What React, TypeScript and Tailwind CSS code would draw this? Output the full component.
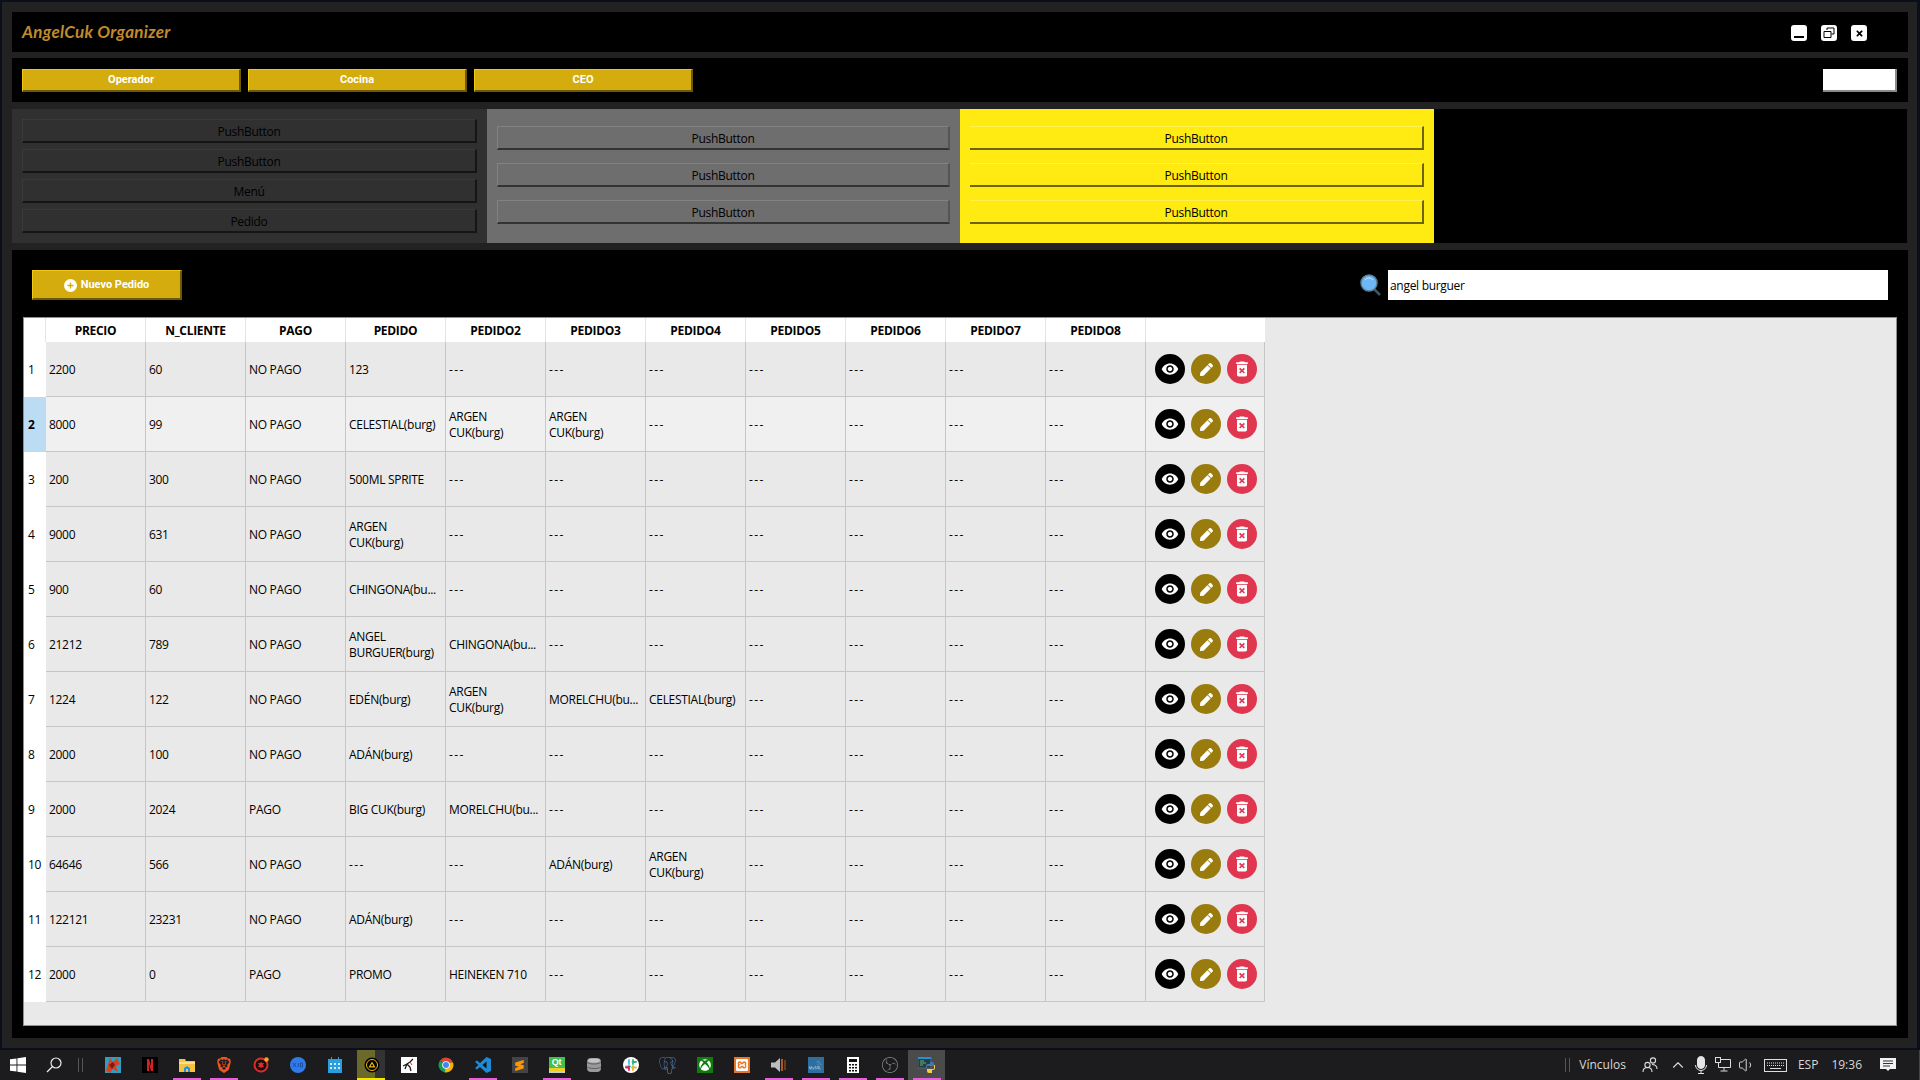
import { ChevronUp, Volume1 } from 'lucide-react'
import { MdDeleteForever, MdVisibility } from 'react-icons/md'
import { FaPen, FaPlus, FaTimes, FaXbox } from 'react-icons/fa'
import { SiBrave, SiMysql, SiObsstudio, SiPostgresql, SiSublimetext, SiXampp } from 'react-icons/si'
import type { ReactNode } from 'react'

const HEADERS = ['PRECIO', 'N_CLIENTE', 'PAGO', 'PEDIDO', 'PEDIDO2', 'PEDIDO3', 'PEDIDO4', 'PEDIDO5', 'PEDIDO6', 'PEDIDO7', 'PEDIDO8']
const ARGEN = 'ARGEN\nCUK(burg)'

// only the cells that differ from '---' are listed, the rest gets padded
const ROWS: string[][] = [
  ['2200', '60', 'NO PAGO', '123'],
  ['8000', '99', 'NO PAGO', 'CELESTIAL(burg)', ARGEN, ARGEN],
  ['200', '300', 'NO PAGO', '500ML SPRITE'],
  ['9000', '631', 'NO PAGO', ARGEN],
  ['900', '60', 'NO PAGO', 'CHINGONA(bu...'],
  ['21212', '789', 'NO PAGO', 'ANGEL\nBURGUER(burg)', 'CHINGONA(bu...'],
  ['1224', '122', 'NO PAGO', 'EDÉN(burg)', ARGEN, 'MORELCHU(bu...', 'CELESTIAL(burg)'],
  ['2000', '100', 'NO PAGO', 'ADÁN(burg)'],
  ['2000', '2024', 'PAGO', 'BIG CUK(burg)', 'MORELCHU(bu...'],
  ['64646', '566', 'NO PAGO', '---', '---', 'ADÁN(burg)', ARGEN],
  ['122121', '23231', 'NO PAGO', 'ADÁN(burg)'],
  ['2000', '0', 'PAGO', 'PROMO', 'HEINEKEN 710'],
]

function PanelButton({ label, className }: { label: string; className: string }) {
  return <button className={`flex h-6 items-center justify-center pt-[3px] text-xs ${className}`}>{label}</button>
}

function RoleButton({ label }: { label: string }) {
  return (
    <button className="h-[23px] w-[219px] border-t border-l border-[#f0c814] border-r-2 border-b-2 border-r-[#6e5800] border-b-[#6e5800] bg-[#d4ac0d] pt-px font-['Roboto',sans-serif] text-[11px] font-bold tracking-normal text-white">
      {label}
    </button>
  )
}

function WindowControl({ children }: { children: ReactNode }) {
  return <button className="flex h-4 w-4 items-center justify-center rounded-[3px] bg-white text-black">{children}</button>
}

function ActionButtons() {
  return (
    <div className="flex items-center gap-1.5 pl-[9px]">
      <button className="flex h-[30px] w-[30px] items-center justify-center rounded-full bg-black text-white"><MdVisibility size={18} /></button>
      <button className="flex h-[30px] w-[30px] items-center justify-center rounded-full bg-[#9a7b0d] text-white"><FaPen size={13} /></button>
      <button className="flex h-[30px] w-[30px] items-center justify-center rounded-full bg-[#e0364f] text-white"><MdDeleteForever size={20} /></button>
    </div>
  )
}

function OrdersTable() {
  return (
    <div className="mx-[11px] mb-3 flex-1 border border-[#8f8f8f] bg-[#e9e9e9]">
      <table className="w-[1241px] table-fixed border-separate border-spacing-0 text-xs text-black">
        <colgroup>
          <col className="w-[22px]" />
          {HEADERS.map(h => <col key={h} className="w-[100px]" />)}
          <col className="w-[119px]" />
        </colgroup>
        <thead>
          <tr className="h-6 bg-white">
            <th className="border-r border-[#e4e4e4]" />
            {HEADERS.map(h => <th key={h} className="border-r border-[#e4e4e4] pt-0.5 font-bold">{h}</th>)}
            <th />
          </tr>
        </thead>
        <tbody>
          {ROWS.map((row, i) => {
            const selected = i === 1
            const cells = [...row, ...Array(11 - row.length).fill('---')]
            return (
              <tr key={i} className={`h-[55px] ${selected ? 'bg-[#f0f0f0]' : ''}`}>
                <td className={`pl-1 ${selected ? 'bg-[#bcdcf4] font-bold' : 'bg-white'}`}>{i + 1}</td>
                {cells.map((cell, j) => (
                  <td
                    key={j}
                    className={`whitespace-pre-line border-r border-b border-[#c6c6c6] px-[3px] pt-0.5 leading-4 ${cell === '---' ? 'tracking-[1.4px]' : ''}`}
                  >
                    {cell}
                  </td>
                ))}
                <td className="border-r border-b border-[#c6c6c6]"><ActionButtons /></td>
              </tr>
            )
          })}
        </tbody>
      </table>
    </div>
  )
}

function TaskIcon({ children, mark, className = '' }: { children?: ReactNode; mark?: boolean; className?: string }) {
  return (
    <div className={`relative flex h-[30px] w-[37px] items-center justify-center ${className}`}>
      {children}
      {mark && <span className="absolute bottom-0 left-1/2 h-0.5 w-7 -translate-x-1/2 bg-[#e85fdc]" />}
    </div>
  )
}

function AppIcons() {
  return (
    <div className="flex">
      <TaskIcon>
        <svg width="16" height="16" viewBox="0 0 16 16">
          <rect width="16" height="16" fill="#2d9fc4" />
          <path d="M1 14 5 1l3 4 4-4 3 6-4 2 2 6-5-3-3 4z" fill="#d9401f" />
          <path d="M4 8 8 5l2 3-3 4z" fill="#7a1d12" />
        </svg>
      </TaskIcon>
      <TaskIcon>
        <svg width="16" height="16" viewBox="0 0 16 16">
          <rect width="16" height="16" fill="#000" />
          <path d="M5 2h2l2 7V2h2v12H9L7 7v7H5z" fill="#d81f26" />
        </svg>
      </TaskIcon>
      <TaskIcon mark>
        <svg width="16" height="16" viewBox="0 0 16 16">
          <path d="M0 2h6l1 2h9v11H0z" fill="#f5c242" />
          <path d="M0 5h16v2H0z" fill="#fbe08a" />
          <path d="M5 15v-4l3-2 3 2v4H9v-3H7v3z" fill="#2a8fd8" />
        </svg>
      </TaskIcon>
      <TaskIcon mark><SiBrave size={16} className="text-[#f0531f]" /></TaskIcon>
      <TaskIcon>
        <svg width="16" height="16" viewBox="0 0 16 16">
          <circle cx="8" cy="8" r="6.5" fill="#111" stroke="#e22a2a" strokeWidth="2" />
          <path d="M8 4.5 11 10H5zM8 11.5 5 6h6z" fill="#e22a2a" />
          <circle cx="13.5" cy="2.5" r="2.2" fill="#f5a623" />
        </svg>
      </TaskIcon>
      <TaskIcon>
        <svg width="16" height="16" viewBox="0 0 16 16">
          <circle cx="8" cy="8" r="8" fill="#2f7be8" />
          <path d="M3 6l3 4M6 6l-3 4M8 10l1-4M10.5 6h2v4h-2z" stroke="#1c50a8" strokeWidth="1" fill="none" />
        </svg>
      </TaskIcon>
      <TaskIcon>
        <svg width="14" height="16" viewBox="0 0 14 16">
          <path d="M0 2h3V0h1v2h6V0h1v2h3v14H0z" fill="#2a9fe0" />
          <path d="M2 6h2v2H2zM6 6h2v2H6zM10 6h2v2h-2zM2 10h2v2H2zM6 10h2v2H6zM10 10h2v2h-2z" fill="#cfeaff" />
        </svg>
      </TaskIcon>
      <TaskIcon>
        <div className="absolute inset-y-0 left-1 w-[18px] bg-[#6b6a2a]" />
        <div className="absolute inset-y-0 left-[22px] w-[10px] bg-[#333]" />
        <svg width="16" height="16" viewBox="0 0 16 16" className="relative">
          <circle cx="8" cy="8" r="7.5" fill="#000" />
          <circle cx="8" cy="8" r="5.5" fill="none" stroke="#f2b705" strokeWidth="1" />
          <path d="M8 4.5 11.5 10.5h-7zM8 6.8l-1.4 2.4h2.8z" fill="#f2b705" fillRule="evenodd" />
        </svg>
        <span className="absolute bottom-0 left-1 h-0.5 w-7 bg-[#f7e600]" />
      </TaskIcon>
      <TaskIcon>
        <svg width="16" height="16" viewBox="0 0 16 16">
          <rect width="16" height="16" fill="#fff" />
          <path d="M12 2 9 5 6 7 4 12M6 7l3 3 1 4M6 7 2 9" stroke="#1a1a1a" strokeWidth="1.3" fill="none" />
          <path d="M9 5l2 3" stroke="#c0392b" strokeWidth="1" />
        </svg>
      </TaskIcon>
      <TaskIcon>
        <svg width="16" height="16" viewBox="0 0 16 16">
          <path d="M8 8 2 3.6A7.5 7.5 0 0 1 15 5.4H8z" fill="#db4437" />
          <path d="M8 8 2 3.6a7.5 7.5 0 0 0 4.8 11.8L10 9z" fill="#0f9d58" />
          <path d="M8 8l-1.2 7.4A7.5 7.5 0 0 0 15 5.4H8z" fill="#f4b400" />
          <circle cx="8" cy="8" r="3.8" fill="#fff" />
          <circle cx="8" cy="8" r="3" fill="#4285f4" />
        </svg>
      </TaskIcon>
      <TaskIcon mark>
        <svg width="16" height="16" viewBox="0 0 16 16">
          <path d="M11.5 0 16 2v12l-4.5 2L5 10l-3 2.5L0 11.3 3.3 8 0 4.7 2 3.5 5 6z" fill="#1f8ad6" />
          <path d="M11.5 4.5 7.5 8l4 3.5z" fill="#111" />
        </svg>
      </TaskIcon>
      <TaskIcon><div className="flex h-4 w-4 items-center justify-center bg-[#444]"><SiSublimetext size={11} className="text-[#ff9800]" /></div></TaskIcon>
      <TaskIcon mark>
        <div className="flex h-4 w-4 flex-col">
          <div className="flex h-[11px] items-center justify-center bg-[#3fc14a] font-['Liberation_Sans',sans-serif] text-[9px] font-bold leading-none text-white">Qt</div>
          <div className="h-[3px] bg-[#f0cf20]" />
          <div className="h-0.5 bg-[#ccc]" />
        </div>
      </TaskIcon>
      <TaskIcon>
        <svg width="16" height="16" viewBox="0 0 16 16">
          <rect x="1" y="1" width="14" height="14" rx="4" fill="#9a9a9a" />
          <path d="M1 5.5c3 2 11 2 14 0M1 10c3 2 11 2 14 0" stroke="#5f5f5f" strokeWidth="1" fill="none" />
          <ellipse cx="8" cy="3.5" rx="6" ry="2" fill="#c4c4c4" />
        </svg>
      </TaskIcon>
      <TaskIcon>
        <svg width="16" height="16" viewBox="0 0 16 16">
          <circle cx="8" cy="8" r="8" fill="#fff" />
          <path d="M6 3v4M3 9.5h4" stroke="#36c5f0" strokeWidth="1.8" strokeLinecap="round" />
          <path d="M10 3v4M9.5 5H13" stroke="#2eb67d" strokeWidth="1.8" strokeLinecap="round" />
          <path d="M10 9v4M9 10.5h4" stroke="#ecb22e" strokeWidth="1.8" strokeLinecap="round" />
          <path d="M6 9.5V13M3 10.5h3" stroke="#e01e5a" strokeWidth="1.8" strokeLinecap="round" />
        </svg>
      </TaskIcon>
      <TaskIcon><SiPostgresql size={17} className="text-[#4f7fae]" /></TaskIcon>
      <TaskIcon><div className="flex h-4 w-4 items-center justify-center bg-[#107c10]"><FaXbox size={12} className="text-white" /></div></TaskIcon>
      <TaskIcon><div className="flex h-4 w-4 items-center justify-center bg-[#e8762b]"><SiXampp size={12} className="text-white" /></div></TaskIcon>
      <TaskIcon mark>
        <svg width="16" height="16" viewBox="0 0 16 16">
          <path d="M0 5.5h4L9 1v14l-5-4.5H0z" fill="#bdbdbd" />
          <path d="M11 2v12" stroke="#e8762b" strokeWidth="1.4" />
          <path d="M14 3v10" stroke="#8a4a1e" strokeWidth="1.4" />
        </svg>
      </TaskIcon>
      <TaskIcon mark><div className="flex h-4 w-4 items-center justify-center bg-[#2f6f9f]"><SiMysql size={13} className="text-[#a8cde6]" /></div></TaskIcon>
      <TaskIcon mark>
        <svg width="12" height="16" viewBox="0 0 12 16">
          <rect width="12" height="16" fill="#fff" />
          <path d="M2 2h8v3H2zM2 7h2v1.5H2zM5 7h2v1.5H5zM8 7h2v1.5H8zM2 10h2v1.5H2zM5 10h2v1.5H5zM8 10h2v1.5H8zM2 13h2v1.5H2zM5 13h2v1.5H5zM8 13h2v1.5H8z" fill="#111" />
        </svg>
      </TaskIcon>
      <TaskIcon mark><SiObsstudio size={16} className="text-[#8a8a8a]" /></TaskIcon>
      <TaskIcon mark className="bg-[#4b4b4b]">
        <svg width="18" height="16" viewBox="0 0 18 16">
          <rect x="0" y="0" width="13" height="11" fill="#2b3a44" stroke="#6a8796" strokeWidth="0.5" />
          <rect x="0" y="0" width="13" height="2" fill="#2a8fd8" />
          <path d="M2 4h4M2 6h6M2 8h3" stroke="#4fbf6a" strokeWidth="1" />
          <path d="M11 5h3a2 2 0 0 1 2 2v2H9v2H8V9a2 2 0 0 1 2-2h2V5z" fill="#3f7cae" />
          <path d="M16 8h1v3a2 2 0 0 1-2 2h-1v3h-3a2 2 0 0 1-2-2v-2h6a1 1 0 0 0 1-1z" fill="#f7cf3e" />
        </svg>
      </TaskIcon>
    </div>
  )
}

function Tray() {
  return (
    <div className="ml-auto flex h-full items-center text-xs tracking-normal text-[#d8d8d8]">
      <span className="h-[14px] w-[5px] border-x border-[#555]" />
      <span className="ml-[9px]">Vínculos</span>
      <svg width="16" height="16" viewBox="0 0 16 16" className="ml-4 text-[#ddd]" fill="none" stroke="currentColor" strokeWidth="1.1">
        <circle cx="5.5" cy="8" r="2.6" />
        <path d="M1 15c0-3 1.5-4.5 4.5-4.5S10 12 10 15" />
        <circle cx="11" cy="3.5" r="2.6" />
        <path d="M10 7.5c3 0 5 1.5 5 4.5" />
      </svg>
      <ChevronUp size={18} strokeWidth={1.5} className="ml-[11px]" />
      <svg width="12" height="18" viewBox="0 0 12 18" className="ml-2" fill="none" stroke="#e5e5e5">
        <rect x="2.5" y="0.5" width="7" height="12" rx="3.5" fill="#e5e5e5" />
        <path d="M0.5 9a5.5 5.5 0 0 0 11 0M6 14.5V17M3 17.5h6" />
      </svg>
      <svg width="16" height="16" viewBox="0 0 16 16" className="ml-2" fill="none" stroke="#ddd">
        <path d="M3.5 2.5h12v8h-12zM9 10.5v3M5.5 14h7" />
        <rect x="0.5" y="0.5" width="5" height="5" fill="#1c1c1e" />
      </svg>
      <Volume1 size={18} strokeWidth={1.3} className="ml-[7px]" />
      <svg width="23" height="13" viewBox="0 0 23 13" className="ml-2" fill="none" stroke="#ddd">
        <rect x="0.5" y="0.5" width="22" height="12" />
        <path d="M3 4h17M3 6.5h17" strokeDasharray="1 1" />
        <path d="M6 9.5h11" />
      </svg>
      <span className="ml-[11px]">ESP</span>
      <span className="ml-[13px]">19:36</span>
      <svg width="16" height="16" viewBox="0 0 16 16" className="ml-[18px]">
        <path d="M0 1h16v11h-6l-2 2-2-2H0z" fill="#f2f2f2" />
        <path d="M3 4h10M3 6.5h10M3 9h7" stroke="#333" strokeWidth="1" />
      </svg>
      <span className="ml-[23px] h-full w-px bg-[#444]" />
    </div>
  )
}

function Taskbar() {
  return (
    <div className="flex h-[30px] shrink-0 items-center bg-[#1c1c1e]">
      <svg width="16" height="16" viewBox="0 0 16 16" className="ml-2.5">
        <path d="M0 2.3 6.5 1.4v6.1H0zM7.4 1.3 16 0v7.500H7.4zM0 8.4h6.5v6.2L0 13.7zM7.4 8.4H16V16l-8.6-1.3z" fill="#fff" />
      </svg>
      <svg width="16" height="16" viewBox="0 0 16 16" className="ml-5" fill="none" stroke="#eee" strokeWidth="1.2">
        <circle cx="10" cy="6" r="5" />
        <path d="M6.5 9.5 1 15" />
      </svg>
      <span className="ml-4 h-[14px] w-[5px] border-x border-[#555]" />
      <div className="ml-[11px]"><AppIcons /></div>
      <Tray />
    </div>
  )
}

export default function App() {
  return (
    <div className="flex h-screen w-screen flex-col overflow-hidden bg-[#0b0f1c] font-['Open_Sans',sans-serif] tracking-[-0.3px]">
      <div className="ml-0.5 mr-[3px] mt-0.5 mb-0.5 flex flex-1 flex-col bg-[#222222] pl-2.5 pr-[9px] pt-2.5 pb-2.5">
        <div className="flex h-10 items-center justify-between bg-black pl-2.5 pr-[41px]">
          <span className="font-['Lato',sans-serif] text-[17px] font-bold italic tracking-[0.3px] text-[#c08a2e]">AngelCuk Organizer</span>
          <div className="mt-0.5 flex gap-3.5">
            <WindowControl><span className="mt-2 h-0.5 w-2.5 bg-black" /></WindowControl>
            <WindowControl>
              <svg width="12" height="12" viewBox="0 0 12 12" fill="none" stroke="#000" strokeWidth="1">
                <path d="M4 3V1h7v6H8.5M1 4.5h7v6H1z" />
              </svg>
            </WindowControl>
            <WindowControl><FaTimes size={9} /></WindowControl>
          </div>
        </div>

        <div className="mt-1.5 flex h-11 items-center gap-[7px] bg-black pl-2.5 pr-[11px]">
          <RoleButton label="Operador" />
          <RoleButton label="Cocina" />
          <RoleButton label="CEO" />
          <button className="ml-auto h-[23px] w-[74px] border-r-2 border-b-2 border-[#8a8a8a] bg-white" />
        </div>

        <div className="mt-[7px] flex h-[134px]">
          <div className="flex w-[475px] flex-col gap-1.5 bg-[#303030] px-2.5 pt-2.5">
            {['PushButton', 'PushButton', 'Menú', 'Pedido'].map((label, i) => (
              <PanelButton key={i} label={label} className="border-t border-l border-[#3a3a3a] border-r-2 border-b-2 border-r-[#151515] border-b-[#151515] bg-[#303030] text-black" />
            ))}
          </div>
          <div className="flex w-[473px] flex-col gap-[13px] bg-[#6e6e6e] px-2.5 pt-[17px]">
            {[1, 2, 3].map(i => (
              <PanelButton key={i} label="PushButton" className="border-t border-l border-[#828282] border-b-2 border-b-[#333] border-r-2 border-r-[#555] bg-[#6e6e6e] text-black" />
            ))}
          </div>
          <div className="flex w-[474px] flex-col gap-[13px] bg-[#ffeb12] px-2.5 pt-[17px]">
            {[1, 2, 3].map(i => (
              <PanelButton key={i} label="PushButton" className="border-t border-[#fff24d] border-r-2 border-b-2 border-r-[#6e6400] border-b-[#6e6400] bg-[#ffeb12] text-black" />
            ))}
          </div>
          <div className="mr-px flex-1 bg-black" />
        </div>

        <div className="mt-[7px] flex flex-1 flex-col bg-black">
          <div className="mb-[17px] mt-5 flex h-[30px] items-center pl-5 pr-5">
            <button className="flex h-[30px] w-[150px] items-center justify-center gap-1 border-t border-l border-[#f0c814] border-r-2 border-b-2 border-r-[#6e5800] border-b-[#6e5800] bg-[#d4ac0d] pt-px font-['Roboto',sans-serif] text-[11px] font-bold tracking-normal text-white">
              <span className="flex h-[13px] w-[13px] items-center justify-center rounded-full bg-white text-[#d4ac0d]"><FaPlus size={7} /></span>
              Nuevo Pedido
            </button>
            <svg width="22" height="22" viewBox="0 0 22 22" className="ml-auto">
              <path d="M14 15 20 21" stroke="#3f5560" strokeWidth="2.5" />
              <circle cx="9" cy="9" r="8" fill="#6cb8f6" stroke="#5c7f96" strokeWidth="1.5" />
              <path d="M5 6a5 5 0 0 1 8 0" stroke="#c5e4fc" strokeWidth="1" fill="none" />
            </svg>
            <input
              readOnly
              value="angel burguer"
              className="ml-[6px] h-[30px] w-[500px] bg-white px-0.5 text-xs text-black outline-none"
            />
          </div>
          <OrdersTable />
        </div>
      </div>
      <Taskbar />
    </div>
  )
}
